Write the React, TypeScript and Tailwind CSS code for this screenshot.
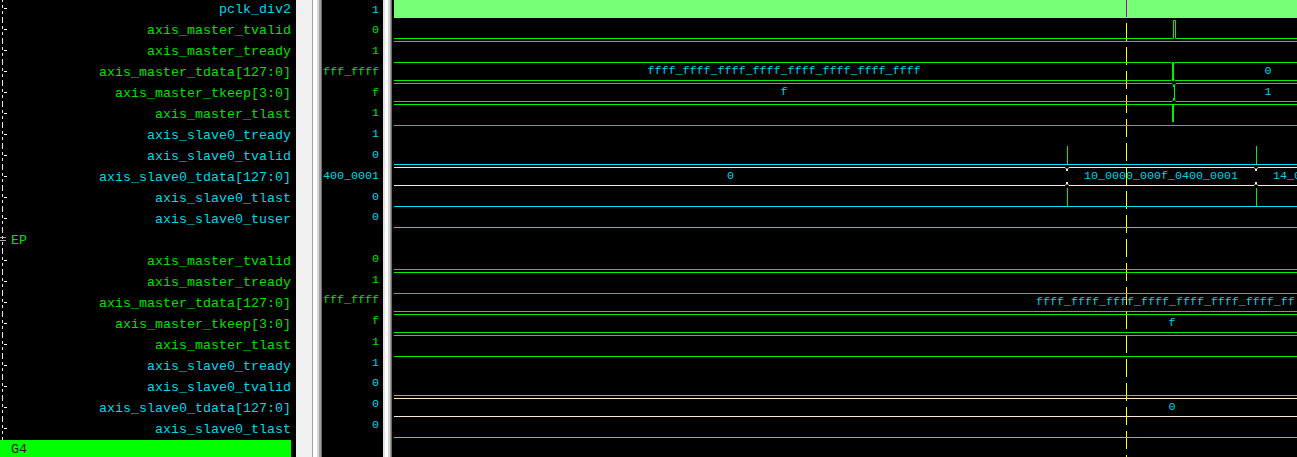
import React from 'react';

type Tone = 'g' | 'c';

interface Row {
  name: string;
  value: string;
  tone: Tone;
  kind?: 'group' | 'bar';
}

const rows: Row[] = [
  { name: 'pclk_div2', value: '1', tone: 'c' },
  { name: 'axis_master_tvalid', value: '0', tone: 'g' },
  { name: 'axis_master_tready', value: '1', tone: 'g' },
  { name: 'axis_master_tdata[127:0]', value: 'fff_ffff', tone: 'g' },
  { name: 'axis_master_tkeep[3:0]', value: 'f', tone: 'g' },
  { name: 'axis_master_tlast', value: '1', tone: 'g' },
  { name: 'axis_slave0_tready', value: '1', tone: 'c' },
  { name: 'axis_slave0_tvalid', value: '0', tone: 'c' },
  { name: 'axis_slave0_tdata[127:0]', value: '400_0001', tone: 'c' },
  { name: 'axis_slave0_tlast', value: '0', tone: 'c' },
  { name: 'axis_slave0_tuser', value: '0', tone: 'c' },
  { name: 'EP', value: '', tone: 'g', kind: 'group' },
  { name: 'axis_master_tvalid', value: '0', tone: 'g' },
  { name: 'axis_master_tready', value: '1', tone: 'g' },
  { name: 'axis_master_tdata[127:0]', value: 'fff_ffff', tone: 'g' },
  { name: 'axis_master_tkeep[3:0]', value: 'f', tone: 'g' },
  { name: 'axis_master_tlast', value: '1', tone: 'g' },
  { name: 'axis_slave0_tready', value: '1', tone: 'c' },
  { name: 'axis_slave0_tvalid', value: '0', tone: 'c' },
  { name: 'axis_slave0_tdata[127:0]', value: '0', tone: 'c' },
  { name: 'axis_slave0_tlast', value: '0', tone: 'c' },
  { name: 'G4', value: '', tone: 'g', kind: 'bar' },
];

const toneClass: Record<Tone, string> = {
  g: 'text-[#00e000]',
  c: 'text-[#00d8e8]',
};

const GREEN = '#00f000';
const CYAN = '#00e4f4';
const WHITE = '#ffe6d4';
const TEXT = '#00d4e4';
const L = 394;
const R = 1297;

// tree guide at the left of each name row
const TreeMark = ({ group }: { group?: boolean }) => (
  <svg width="10" height="21" className="shrink-0">
    <line x1="2.5" y1="0" x2="2.5" y2="21" stroke="#e6e6e6" strokeDasharray="3 3" />
    {group ? (
      <>
        <rect x="0" y="7" width="6" height="1" fill="#a8a8a8" />
        <rect x="0" y="10" width="6" height="1" fill="#a8a8a8" />
      </>
    ) : (
      <line x1="4" y1="9.5" x2="7" y2="9.5" stroke="#ffffff" />
    )}
  </svg>
);

// bus: top/bottom rails with narrow crossings at each transition
const bus = (top: number, bot: number, cuts: number[]) => {
  const edges = [L, ...cuts, R + 10];
  let d = '';
  for (let i = 0; i < edges.length - 1; i++) {
    const a = edges[i];
    const b = edges[i + 1];
    const a0 = i === 0 ? a : a + 2;
    const b0 = i === edges.length - 2 ? b : b - 2;
    d += `M${a0},${top + 0.5} H${b0} `;
    d += `M${a0},${bot + 0.5} H${b0} `;
    if (i > 0) {
      d += `M${a + 0.5},${top + 4} L${a + 0.5},${top + 2} L${a0},${top + 0.5} `;
      d += `M${a + 0.5},${bot - 3} L${a + 0.5},${bot - 1} L${a0},${bot + 0.5} `;
    }
    if (i < edges.length - 2) {
      d += `M${b0},${top + 0.5} L${b - 0.5},${top + 2} L${b - 0.5},${top + 4} `;
      d += `M${b0},${bot + 0.5} L${b - 0.5},${bot - 1} L${b - 0.5},${bot - 3} `;
    }
  }
  return d;
};

const hline = (y: number) => `M${L},${y + 0.5} H${R}`;

const Waves = () => (
  <svg width="905" height="457" viewBox="392 0 905 457" className="block">
    <rect x={L} y="0" width={R - L} height="18" fill="#78ff78" />
    <line x1="1126.5" y1="0" x2="1126.5" y2="17" stroke="#b000b0" />

    {/* group 1 master */}
    <path d={`M${L},38.5 H1173.5 V20.5 H1175.5 V38.5 H${R}`} stroke={GREEN} fill="none" />
    <path d={hline(41)} stroke={GREEN} />
    <path d={bus(62, 80, [1173])} stroke={GREEN} fill="none" />
    <rect x="1172" y="62" width="2" height="19" fill={GREEN} />
    <path d={bus(83, 101, [1174])} stroke={GREEN} fill="none" />
    <line x1="1174.5" y1="86" x2="1174.5" y2="99" stroke={GREEN} />
    <path d={hline(104)} stroke={GREEN} />
    <rect x="1172" y="104" width="2" height="18" fill={GREEN} />

    {/* group 1 slave */}
    <path d={hline(125)} stroke={GREEN} />
    <path d={hline(164)} stroke={CYAN} />
    <path d={bus(167, 185, [1067, 1256])} stroke={WHITE} fill="none" />
    <path d={hline(206)} stroke={CYAN} />
    <path d={hline(227)} stroke={CYAN} />
    <path d="M1067.5,146 V164 M1256.5,146 V164 M1067.5,188 V206 M1256.5,188 V206" stroke={GREEN} />

    {/* EP master */}
    <path d={hline(269)} stroke={GREEN} />
    <path d={hline(272)} stroke={GREEN} />
    <path d={bus(293, 311, [])} stroke={GREEN} fill="none" />
    <path d={bus(314, 332, [])} stroke={GREEN} fill="none" />
    <path d={hline(335)} stroke={GREEN} />

    {/* EP slave */}
    <path d={hline(356)} stroke={GREEN} />
    <path d={hline(395)} stroke={CYAN} />
    <path d={bus(398, 416, [])} stroke={WHITE} fill="none" />
    <path d={hline(437)} stroke={CYAN} />

    <g
      fill={TEXT}
      fontFamily='"Liberation Mono", monospace'
      fontSize="11.67"
      dominantBaseline="central"
      textAnchor="middle"
    >
      <text x="784" y="71">ffff_ffff_ffff_ffff_ffff_ffff_ffff_ffff</text>
      <text x="1268" y="71">0</text>
      <text x="784" y="92">f</text>
      <text x="1268" y="92">1</text>
      <text x="730.5" y="176">0</text>
      <text x="1161" y="176">10_0000_000f_0400_0001</text>
      <text x="1273" y="176" textAnchor="start">14_0</text>
      <text x="1036" y="302" textAnchor="start">ffff_ffff_ffff_ffff_ffff_ffff_ffff_ff</text>
      <text x="1172" y="323">f</text>
      <text x="1172" y="407">0</text>
    </g>

    <line x1="1126.5" y1="23" x2="1126.5" y2="457" stroke="#ffff00" strokeDasharray="18 6" />
  </svg>
);

const App = () => {
  return (
    <div className="flex h-[457px] w-[1297px] overflow-hidden bg-black font-['Liberation_Mono',monospace]">
      {/* signal names */}
      <div className="-mt-[1px] flex w-[296px] shrink-0 flex-col pr-[5px] text-[13.33px]">
        {rows.map((r, i) =>
          r.kind === 'bar' ? (
            <div key={i} className="flex h-[19px] items-center bg-[#00ff00] pl-[11px] text-[#1c1c1c]">
              {r.name}
            </div>
          ) : (
            <div key={i} className="flex h-[21px] items-center whitespace-nowrap">
              <TreeMark group={r.kind === 'group'} />
              {r.kind === 'group' ? (
                <span className={`ml-[1px] ${toneClass[r.tone]}`}>{r.name}</span>
              ) : (
                <span className={`flex-1 text-right ${toneClass[r.tone]}`}>{r.name}</span>
              )}
            </div>
          )
        )}
      </div>

      {/* splitter */}
      <div className="flex w-[26px] shrink-0">
        <div className="w-[16px] bg-[#f0f0f0]" />
        <div className="w-px bg-[#a0a0a0]" />
        <div className="w-[4px] bg-white" />
        <div className="w-[2px] bg-[#d6d6d6]" />
        <div className="w-[2px] bg-[#a0a0a0]" />
        <div className="w-px bg-[#696969]" />
      </div>

      {/* values */}
      <div className="flex w-[61px] shrink-0 flex-col pr-[4px] text-[11.67px]">
        {rows.map((r, i) => (
          <div key={i} className={`flex h-[21px] items-center justify-end whitespace-nowrap ${toneClass[r.tone]}`}>
            {r.value}
          </div>
        ))}
      </div>

      <div className="flex w-[9px] shrink-0">
        <div className="w-[2px] bg-[#e0e0e0]" />
        <div className="w-[3px] bg-white" />
        <div className="w-[2px] bg-[#d4d4d4]" />
        <div className="w-px bg-[#a0a0a0]" />
        <div className="w-px bg-[#696969]" />
      </div>

      {/* waveforms */}
      <div className="flex-1 overflow-hidden">
        <Waves />
      </div>
    </div>
  );
};

export default App;
